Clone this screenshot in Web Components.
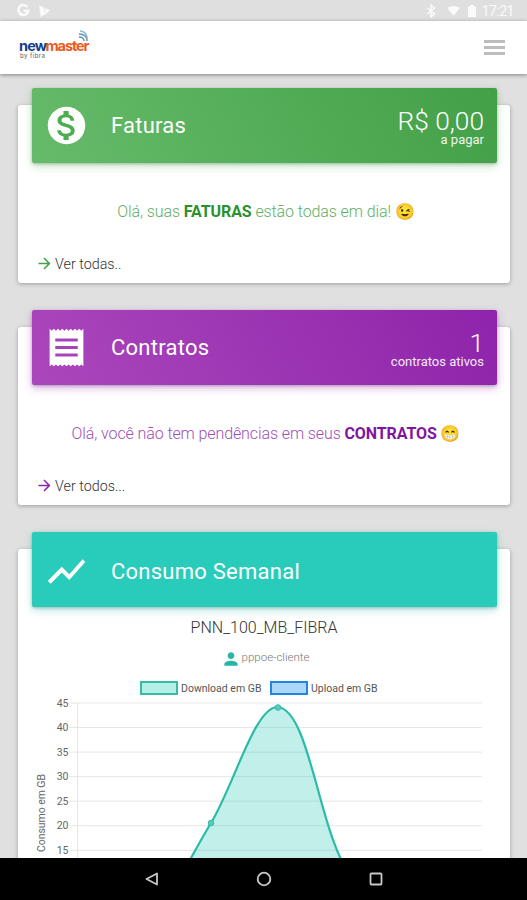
<!DOCTYPE html>
<html lang="pt-BR">
<head>
<meta charset="utf-8">
<meta name="viewport" content="width=device-width, initial-scale=1">
<title>Newmaster</title>
<style>
  html, body {
    margin: 0;
    height: 100%;
    overflow: hidden;
    background: #e0e0e0;
    font-family: Roboto, "Liberation Sans", sans-serif;
  }
</style>
</head>
<body>
<portal-app></portal-app>

<script>
class StatusBar extends HTMLElement {
  constructor() {
    super();
    this.attachShadow({ mode: 'open' });
  }

  connectedCallback() {
    this.shadowRoot.innerHTML = `
      <style>
        :host {
          display: flex;
          flex: none;
          align-items: center;
          justify-content: space-between;
          box-sizing: border-box;
          height: 21px;
          padding: 0 13px 0 16px;
          background: #dfdfdf;
          color: #fafafa;
          font-size: 14px;
        }
        div { display: flex; align-items: center; }
        svg { display: block; }
        .left { gap: 7px; }
        .clock { margin-left: 6px; letter-spacing: -.5px; }
      </style>
      <div class="left">
        <svg width="15" height="15" viewBox="0 0 15 15" fill="none" stroke="#fafafa" stroke-width="2.5"><path d="M11.5 4A5 5 0 1 0 12.4 7.7H7.6"/></svg>
        <svg width="13" height="14" viewBox="0 0 13 14" fill="#fafafa"><path d="M1.2 1.5 12 6.2 8.4 9.4 2.6 13z"/><path d="m5.5 4 2.5 2.4-1.7 1.8" fill="none" stroke="#dfdfdf"/></svg>
      </div>
      <div>
        <svg width="10" height="14" viewBox="0 0 10 14" fill="none" stroke="#fafafa" stroke-width="1.5"><path d="m1.5 4 7 6L5 13V1l3.500 3-7 6"/></svg>
        <svg style="margin-left:11px" width="13" height="12" viewBox="0 0 14 12" fill="#fafafa"><path d="M0 2.500Q7-1.500 14 2.500L7 11z"/></svg>
        <svg style="margin-left:8px" width="8" height="12" viewBox="0 0 8 12" fill="#fafafa"><path d="M2 0h4v1.500h2V12H0V1.500h2z"/></svg>
        <span class="clock">17:21</span>
      </div>
    `;
  }
}

class SiteHeader extends HTMLElement {
  constructor() {
    super();
    this.attachShadow({ mode: 'open' });
  }

  connectedCallback() {
    this.shadowRoot.innerHTML = `
      <style>
        :host {
          display: flex;
          flex: none;
          align-items: center;
          justify-content: space-between;
          box-sizing: border-box;
          height: 53px;
          padding: 0 22px 0 18px;
          background: #fff;
          box-shadow: 0 1px 4px rgba(0, 0, 0, .42);
          z-index: 1;
        }
        svg { display: block; overflow: visible; }
        .menu {
          display: grid;
          gap: 3px;
          width: 21px;
        }
        .menu i { height: 2.700px; background: #bdbdbd; }
      </style>
      <svg width="76" height="36" viewBox="0 0 76 36" font-family="Inter, sans-serif">
        <g transform="translate(1 21)" font-size="14.500" font-weight="700" letter-spacing="-.9">
          <text fill="#12408f">new</text>
          <text x="26.500" fill="#ee5a1c" textLength="43">master</text>
        </g>
        <text x="2" y="27.500" font-size="6" font-weight="500" fill="#777" textLength="25">by fibra</text>
        <g fill="none" stroke="#5b93b8" stroke-width="1.400">
          <path d="M61 7q5 0 5 4M61 4q8 0 8 7"/>
          <path d="M62 1q8 1 7 9" stroke="#8fb4cc"/>
        </g>
      </svg>
      <div class="menu"><i></i><i></i><i></i></div>
    `;
  }
}

class PortalCard extends HTMLElement {
  constructor() {
    super();
    this.attachShadow({ mode: 'open' });
  }

  connectedCallback() {
    this.shadowRoot.innerHTML = `
      <style>
        :host {
          display: flex;
          flex: none;
          flex-direction: column;
          box-sizing: border-box;
          height: 178px;
          background: #fff;
          border-radius: 3px;
          box-shadow: 0 1px 4px rgba(0, 0, 0, .3);
          --accent: #43a047;
          --soft: #5fae63;
          --strong: #2b912f;
          --head: linear-gradient(60deg, #66bb6a, #43a047);
          --glow: rgba(76, 175, 80, .35);
        }
        :host([color="purple"]) {
          --accent: #8e24aa;
          --soft: #a04fb5;
          --strong: #82149f;
          --head: linear-gradient(60deg, #ab47bc, #8e24aa);
          --glow: rgba(156, 39, 176, .35);
        }
        :host([color="teal"]) {
          height: 420px;
          --accent: #26b8a5;
          --head: #29ccba;
          --glow: rgba(38, 184, 165, .35);
        }
        .head {
          display: flex;
          flex: none;
          align-items: center;
          box-sizing: border-box;
          height: 75px;
          margin: -17px 13px 0 14px;
          padding: 0 13px 0 12px;
          border-radius: 2px;
          background: var(--head);
          color: #fff;
          box-shadow: 0 3px 9px var(--glow), 0 1px 3px rgba(0, 0, 0, .25);
        }
        :host([color="teal"]) .head { padding-top: 3px; }
        h2 {
          flex: 1;
          margin: 0 0 0 22px;
          font-size: 22px;
          font-weight: 400;
          letter-spacing: .25px;
        }
        .value { text-align: right; font-weight: 300; }
      </style>
      <div class="head">
        <slot name="icon"></slot>
        <h2>${this.getAttribute('heading')}</h2>
        <div class="value"><slot name="value"></slot></div>
      </div>
      <slot></slot>
    `;
  }
}

class CardValue extends HTMLElement {
  constructor() {
    super();
    this.attachShadow({ mode: 'open' });
  }

  connectedCallback() {
    this.shadowRoot.innerHTML = `
      <style>
        :host { display: block; color: #fff; }
        .number { font-size: 26.300px; line-height: 26px; margin-top: 3px; }
        .label { font-size: 13px; line-height: 12px; font-weight: 400; opacity: .9; }
      </style>
      <div class="number">${this.getAttribute('number')}</div>
      <div class="label">${this.getAttribute('label')}</div>
    `;
  }
}

class CardMessage extends HTMLElement {
  constructor() {
    super();
    this.attachShadow({ mode: 'open' });
  }

  connectedCallback() {
    this.shadowRoot.innerHTML = `
      <style>
        :host {
          display: flex;
          flex: 1;
          flex-direction: column;
          font-weight: 300;
        }
        p {
          margin: 38px 0 0 4px;
          color: var(--soft);
          font-size: 16px;
          line-height: 22px;
          letter-spacing: -.1px;
          text-align: center;
          white-space: nowrap;
        }
        a {
          display: flex;
          align-items: center;
          gap: 3px;
          margin: auto 0 9px 19px;
          color: #333;
          font-size: 14.300px;
          line-height: 20px;
        }
        a svg { color: var(--accent); }
        a span { padding-top: 1px; }
      </style>
      <p><slot></slot></p>
      <a>
        <svg width="15" height="15" viewBox="0 0 24 24" fill="currentColor"><path d="M12 4l-1.410 1.410L16.170 11H4v2h12.170l-5.580 5.590L12 20l8-8z" transform="translate(-2.400 -2.400) scale(1.200)"/></svg>
        <span>${this.getAttribute('link')}</span>
      </a>
    `;
  }
}

class UsageChart extends HTMLElement {
  constructor() {
    super();
    this.attachShadow({ mode: 'open' });
  }

  connectedCallback() {
    // y do topo = 45 GB, 24.55px a cada 5 GB
    let grid = '';
    for (let i = 0; i < 7; i++) {
      const y = 15 + i * 24.55;
      grid += `<path d="M51 ${y}H464" stroke="#e6e6e6"/>
        <text x="50.500" y="${y + 3.500}" text-anchor="end">${45 - i * 5}</text>`;
    }
    this.shadowRoot.innerHTML = `
      <style>
        :host { display: block; text-align: center; font-weight: 300; }
        h3 { margin: 11px 0 0; font-size: 16px; line-height: 20px; font-weight: 300; color: #333; }
        .user {
          display: flex;
          align-items: center;
          justify-content: center;
          gap: 1px;
          margin: 11px 0 0 2px;
          height: 20px;
          font-size: 11.500px;
          color: #777;
        }
        .user span { margin-top: -4px; }
        .legend {
          display: flex;
          align-items: center;
          gap: 4px;
          margin: 12px 0 1px 122px;
          height: 14px;
          color: #555;
          font-size: 10.500px;
          font-weight: 400;
        }
        .legend i {
          box-sizing: border-box;
          width: 38px;
          height: 14px;
          border: 2px solid #35bca7;
          background: #b5f0e8;
        }
        .legend span { width: 83px; text-align: left; margin: 0 2px 0 -1px; white-space: nowrap; }
        .legend i.up { border-color: #2286dc; background: #acd6fa; }
        svg { display: block; }
      </style>
      <h3>PNN_100_MB_FIBRA</h3>
      <div class="user">
        <svg width="20" height="20" viewBox="0 0 24 24" fill="#26b8a5"><path d="M12 12c2.210 0 4-1.790 4-4s-1.790-4-4-4-4 1.790-4 4 1.790 4 4 4zm0 2c-2.670 0-8 1.340-8 4v2h16v-2c0-2.660-5.330-4-8-4z"/></svg>
        <span>pppoe-cliente</span>
      </div>
      <div class="legend">
        <i></i><span>Download em GB</span>
        <i class="up"></i><span>Upload em GB</span>
      </div>
      <svg width="492" height="230" viewBox="0 8 492 230" font-size="10.500" font-weight="400" fill="#666">
        ${grid}
        <path d="M59.500 15V238" stroke="#e6e6e6"/>
        <text transform="translate(26.500 164) rotate(-90)" textLength="78">Consumo em GB</text>
        <path d="M126 230C150 220 168 176 193 135 217 95 237 18 260 19 290 22 300 132 327 179Q340 205 360 225V230z" fill="rgba(41,204,186,.29)"/>
        <path d="M126 230C150 220 168 176 193 135 217 95 237 18 260 19 290 22 300 132 327 179Q340 205 360 225" fill="none" stroke="#2cbba6" stroke-width="2.200"/>
        <g fill="#59ccb9" stroke="#35bca7"><circle cx="193" cy="135" r="2.800"/><circle cx="260" cy="19.500" r="2.800"/></g>
      </svg>
    `;
  }
}

class NavBar extends HTMLElement {
  constructor() {
    super();
    this.attachShadow({ mode: 'open' });
  }

  connectedCallback() {
    this.shadowRoot.innerHTML = `
      <style>
        :host {
          display: flex;
          flex: none;
          align-items: center;
          justify-content: center;
          gap: 96px;
          height: 42px;
          background: #000;
          z-index: 1;
        }
        svg { display: block; fill: none; stroke: #c8c8c8; stroke-width: 1.800; }
      </style>
      <svg width="16" height="16" viewBox="0 0 16 16"><path d="M13 2.500v11L2.500 8z" stroke-linejoin="round"/></svg>
      <svg width="16" height="16" viewBox="0 0 16 16"><circle cx="8" cy="8" r="6.300"/></svg>
      <svg width="16" height="16" viewBox="0 0 16 16"><rect x="2.500" y="2.500" width="11" height="11" rx="1"/></svg>
    `;
  }
}

class PortalApp extends HTMLElement {
  constructor() {
    super();
    this.attachShadow({ mode: 'open' });
  }

  connectedCallback() {
    this.shadowRoot.innerHTML = `
      <style>
        :host {
          display: flex;
          flex-direction: column;
          width: 100%;
          height: 900px;
          overflow: hidden;
        }
        main {
          display: flex;
          flex: 1;
          flex-direction: column;
          gap: 44px;
          min-height: 0;
          box-sizing: border-box;
          padding: 31px 17px 0 18px;
          overflow: hidden;
        }
        b { font-weight: 700; color: var(--strong); }
        svg { display: block; flex: none; }
      </style>
      <status-bar></status-bar>
      <site-header></site-header>
      <main>
        <portal-card color="green" heading="Faturas">
          <svg slot="icon" width="45" height="45" viewBox="0 0 24 24"><circle cx="12" cy="12" r="10" fill="#fff"/><path fill="#4cae50" d="M11.800 10.900c-2.270-.590-3-1.200-3-2.150 0-1.090 1.010-1.850 2.700-1.850 1.780 0 2.440.850 2.500 2.100h2.210c-.070-1.720-1.120-3.300-3.210-3.810V3h-3v2.160c-1.940.420-3.500 1.680-3.500 3.610 0 2.310 1.910 3.460 4.700 4.130 2.500.600 3 1.480 3 2.410 0 .690-.490 1.790-2.700 1.790-2.060 0-2.870-.920-2.980-2.100h-2.200c.120 2.190 1.760 3.420 3.680 3.830V21h3v-2.150c1.950-.370 3.500-1.500 3.500-3.550 0-2.840-2.430-3.810-4.700-4.400z" transform="translate(1.200 1.680) scale(.92 .86)"/></svg>
          <card-value slot="value" number="R$ 0,00" label="a pagar"></card-value>
          <card-message link="Ver todas..">Olá, suas <b>FATURAS</b> estão todas em dia! 😉</card-message>
        </portal-card>
        <portal-card color="purple" heading="Contratos">
          <svg slot="icon" width="45" height="45" viewBox="0 0 24 24" fill="#fff"><path fill-rule="evenodd" d="M3 2l1.125 1 1.125-1 1.125 1 1.125-1 1.125 1 1.125-1 1.125 1 1.125-1 1.125 1 1.125-1 1.125 1 1.125-1 1.125 1 1.125-1 1.125 1 1.125-1v20l-1.125-1-1.125 1-1.125-1-1.125 1-1.125-1-1.125 1-1.125-1-1.125 1-1.125-1-1.125 1-1.125-1-1.125 1-1.125-1-1.125 1-1.125-1-1.125 1zM6 7.200h12v1.600H6zm0 4h12v1.600H6zm0 4h12v1.600H6z"/></svg>
          <card-value slot="value" number="1" label="contratos ativos"></card-value>
          <card-message link="Ver todos...">Olá, você não tem pendências em seus <b>CONTRATOS</b> 😁</card-message>
        </portal-card>
        <portal-card color="teal" heading="Consumo Semanal">
          <svg slot="icon" width="45" height="45" viewBox="0 0 24 24" fill="#fff"><path d="M3.500 18.490l6-6.010 4 4L22 6.920l-1.410-1.410-7.090 7.970-4-4L2 16.990z"/></svg>
          <usage-chart></usage-chart>
        </portal-card>
      </main>
      <nav-bar></nav-bar>
    `;
  }
}

customElements.define('status-bar', StatusBar);
customElements.define('site-header', SiteHeader);
customElements.define('portal-card', PortalCard);
customElements.define('card-value', CardValue);
customElements.define('card-message', CardMessage);
customElements.define('usage-chart', UsageChart);
customElements.define('nav-bar', NavBar);
customElements.define('portal-app', PortalApp);
</script>
</body>
</html>
